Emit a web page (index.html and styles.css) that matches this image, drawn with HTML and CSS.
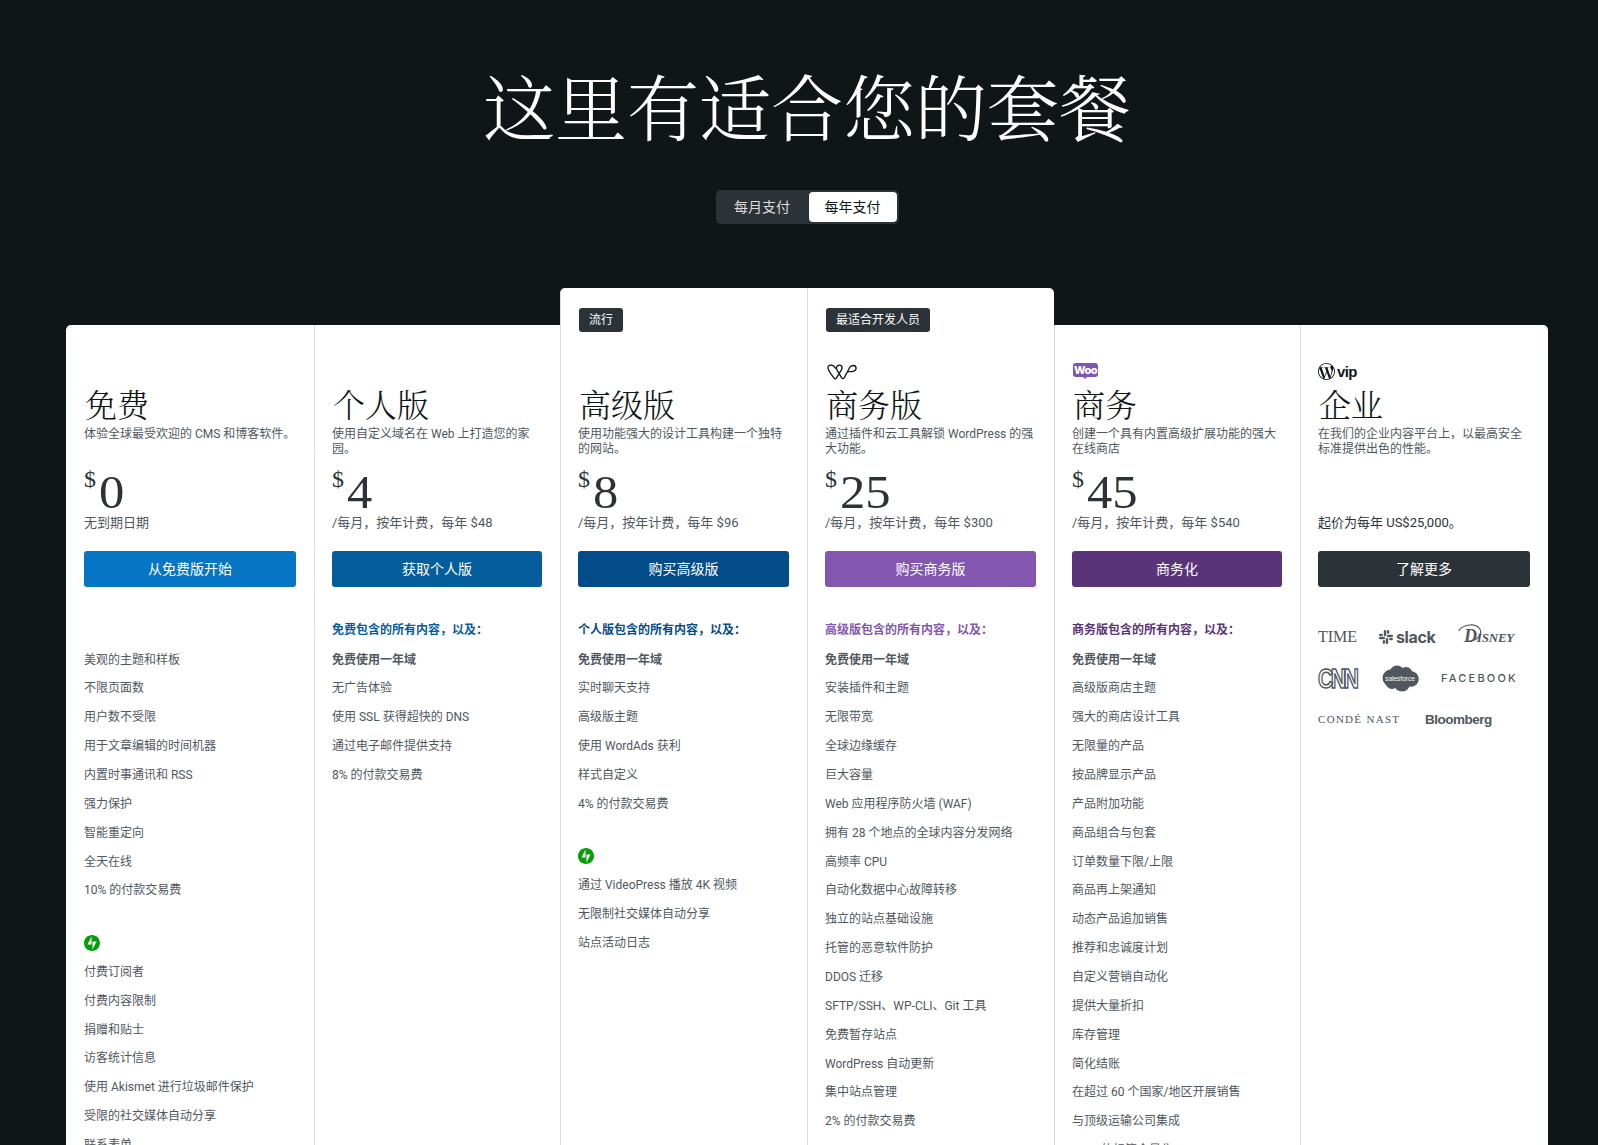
FILE: index.html
```html
<!DOCTYPE html>
<html lang="zh-CN">
<head>
<meta charset="utf-8">
<title>WordPress 套餐</title>
<link rel="stylesheet" href="styles.css">
</head>
<body>
<main class="page">
  <header class="hero">
    <h1 class="title">这里有适合您的套餐</h1>
    <div class="toggle">
      <span class="toggle-item">每月支付</span>
      <span class="toggle-item toggle-item-on">每年支付</span>
    </div>
  </header>

  <section class="plans">
    <article class="plan plan-first">
      <div class="logo-slot"></div>
      <h2 class="name">免费</h2>
      <p class="desc">体验全球最受欢迎的 CMS 和博客软件。</p>
      <div class="price"><span class="cur">$</span><span class="num">0</span></div>
      <p class="sub">无到期日期</p>
      <a class="cta cta-free">从免费版开始</a>
      <p class="incl"></p>
      <ul class="feats">
        <li>美观的主题和样板</li><li>不限页面数</li><li>用户数不受限</li><li>用于文章编辑的时间机器</li><li>内置时事通讯和 RSS</li><li>强力保护</li><li>智能重定向</li><li>全天在线</li><li>10% 的付款交易费</li>
      </ul>
      <svg class="jp" viewBox="0 0 32 32"><path fill="#069e08" fill-rule="evenodd" d="M16 0C7.200 0 0 7.200 0 16s7.200 16 16 16 16-7.200 16-16S24.800 0 16 0zM15 19H7l8-16v16zM17 29V13h8l-8 16z"/></svg>
      <ul class="feats feats-after">
        <li>付费订阅者</li><li>付费内容限制</li><li>捐赠和贴士</li><li>访客统计信息</li><li>使用 Akismet 进行垃圾邮件保护</li><li>受限的社交媒体自动分享</li><li>联系表单</li>
      </ul>
    </article>

    <article class="plan">
      <div class="logo-slot"></div>
      <h2 class="name">个人版</h2>
      <p class="desc">使用自定义域名在 Web 上打造您的家园。</p>
      <div class="price"><span class="cur">$</span><span class="num">4</span></div>
      <p class="sub">/每月，按年计费，每年 $48</p>
      <a class="cta cta-personal">获取个人版</a>
      <p class="incl incl-personal">免费包含的所有内容，以及：</p>
      <ul class="feats">
        <li class="strong">免费使用一年域</li><li>无广告体验</li><li>使用 SSL 获得超快的 DNS</li><li>通过电子邮件提供支持</li><li>8% 的付款交易费</li>
      </ul>
    </article>

    <article class="plan plan-raised">
      <div class="tag-slot"><span class="tag">流行</span></div>
      <div class="logo-slot"></div>
      <h2 class="name">高级版</h2>
      <p class="desc">使用功能强大的设计工具构建一个独特的网站。</p>
      <div class="price"><span class="cur">$</span><span class="num">8</span></div>
      <p class="sub">/每月，按年计费，每年 $96</p>
      <a class="cta cta-premium">购买高级版</a>
      <p class="incl incl-premium">个人版包含的所有内容，以及：</p>
      <ul class="feats">
        <li class="strong">免费使用一年域</li><li>实时聊天支持</li><li>高级版主题</li><li>使用 WordAds 获利</li><li>样式自定义</li><li>4% 的付款交易费</li>
      </ul>
      <svg class="jp" viewBox="0 0 32 32"><path fill="#069e08" fill-rule="evenodd" d="M16 0C7.200 0 0 7.200 0 16s7.200 16 16 16 16-7.200 16-16S24.800 0 16 0zM15 19H7l8-16v16zM17 29V13h8l-8 16z"/></svg>
      <ul class="feats feats-after">
        <li>通过 VideoPress 播放 4K 视频</li><li>无限制社交媒体自动分享</li><li>站点活动日志</li>
      </ul>
    </article>

    <article class="plan plan-raised">
      <div class="tag-slot"><span class="tag">最适合开发人员</span></div>
      <div class="logo-slot">
        <svg class="logo-wp" viewBox="0 0 32 18" fill="none" stroke="#101517" stroke-width="1.400" stroke-linejoin="round" stroke-linecap="round">
          <path d="M9 5.500C7 1.500 1 1 1 5 1 8 4.500 12 7.500 16 8.200 17 9.300 17 10 16L15.500 7C17.500 3 14 1.500 12 2.500 10 3.500 9.500 5.500 11 8L15.500 15.500C16.500 17 17.500 17 18.500 15.500L24 5C25.500 2 31 1.500 31 5.500 31 9 26 9.500 22 9"/>
        </svg>
      </div>
      <h2 class="name">商务版</h2>
      <p class="desc">通过插件和云工具解锁 WordPress 的强大功能。</p>
      <div class="price"><span class="cur">$</span><span class="num">25</span></div>
      <p class="sub">/每月，按年计费，每年 $300</p>
      <a class="cta cta-business">购买商务版</a>
      <p class="incl incl-business">高级版包含的所有内容，以及：</p>
      <ul class="feats">
        <li class="strong">免费使用一年域</li><li>安装插件和主题</li><li>无限带宽</li><li>全球边缘缓存</li><li>巨大容量</li><li>Web 应用程序防火墙 (WAF)</li><li>拥有 28 个地点的全球内容分发网络</li><li>高频率 CPU</li><li>自动化数据中心故障转移</li><li>独立的站点基础设施</li><li>托管的恶意软件防护</li><li>DDOS 迁移</li><li>SFTP/SSH、WP-CLI、Git 工具</li><li>免费暂存站点</li><li>WordPress 自动更新</li><li>集中站点管理</li><li>2% 的付款交易费</li>
      </ul>
    </article>

    <article class="plan">
      <div class="logo-slot">
        <span class="logo-woo">Woo</span>
      </div>
      <h2 class="name">商务</h2>
      <p class="desc">创建一个具有内置高级扩展功能的强大在线商店</p>
      <div class="price"><span class="cur">$</span><span class="num">45</span></div>
      <p class="sub">/每月，按年计费，每年 $540</p>
      <a class="cta cta-commerce">商务化</a>
      <p class="incl incl-commerce">商务版包含的所有内容，以及：</p>
      <ul class="feats">
        <li class="strong">免费使用一年域</li><li>高级版商店主题</li><li>强大的商店设计工具</li><li>无限量的产品</li><li>按品牌显示产品</li><li>产品附加功能</li><li>商品组合与包套</li><li>订单数量下限/上限</li><li>商品再上架通知</li><li>动态产品追加销售</li><li>推荐和忠诚度计划</li><li>自定义营销自动化</li><li>提供大量折扣</li><li>库存管理</li><li>简化结账</li><li>在超过 60 个国家/地区开展销售</li><li>与顶级运输公司集成</li><li>eBay 的标签全量化</li>
      </ul>
    </article>

    <article class="plan plan-last">
      <div class="logo-slot logo-vip">
        <svg class="wp-mark" viewBox="2 2 20 20"><path fill="#101517" d="M12.158 12.786l-2.698 7.84c.806.236 1.657.365 2.54.365 1.047 0 2.051-.18 2.986-.51-.024-.037-.046-.078-.065-.123l-2.763-7.57zM3.009 12c0 3.559 2.068 6.634 5.067 8.092L3.788 8.341C3.289 9.459 3.009 10.696 3.009 12zM18.069 11.546c0-1.112-.399-1.881-.741-2.48-.456-.741-.883-1.368-.883-2.109 0-.826.627-1.596 1.51-1.596.04 0 .078.005.116.007C16.472 4.203 14.34 3.009 12 3.009c-3.141 0-5.904 1.612-7.512 4.052.211.007.41.011.579.011.94 0 2.396-.114 2.396-.114.484-.028.541.683.057.74 0 0-.487.057-1.029.085l3.274 9.739 1.968-5.901-1.401-3.838c-.484-.028-.943-.085-.943-.085-.485-.029-.428-.769.057-.741 0 0 1.484.114 2.368.114.94 0 2.397-.114 2.397-.114.485-.028.542.683.057.74 0 0-.488.057-1.029.085l3.249 9.665.897-2.996C17.841 13.284 18.069 12.316 18.069 11.546zM19.889 7.686c.039.286.06.593.06.924 0 .912-.171 1.938-.684 3.22l-2.746 7.94C19.173 18.212 20.991 15.319 20.991 12c0-1.564-.399-3.034-1.102-4.314zM12 22C6.486 22 2 17.514 2 12S6.486 2 12 2s10 4.486 10 10-4.486 10-10 10z"/></svg>
        <span class="vip">vip</span>
      </div>
      <h2 class="name">企业</h2>
      <p class="desc">在我们的企业内容平台上，以最高安全标准提供出色的性能。</p>
      <div class="price"></div>
      <p class="sub sub-ent">起价为每年 US$25,000。</p>
      <a class="cta cta-ent">了解更多</a>
      <div class="brands">
        <div class="brand-row">
          <span class="b-time">TIME</span>
          <span class="b-slack">
            <svg class="slack-mark" viewBox="0 0 16 16" fill="#50575e"><rect x="5.500" y="0" width="2.800" height="7" rx="1.400"/><rect x="9" y="5.500" width="7" height="2.800" rx="1.400"/><rect x="7.700" y="9" width="2.800" height="7" rx="1.400"/><rect x="0" y="7.700" width="7" height="2.800" rx="1.400"/><rect x="0" y="4.300" width="4.500" height="2.600" rx="1.300"/><rect x="11.500" y="9.100" width="4.500" height="2.600" rx="1.300"/><rect x="9.100" y="0" width="2.600" height="4.500" rx="1.300"/><rect x="4.300" y="11.500" width="2.600" height="4.500" rx="1.300"/></svg>
            <span>slack</span>
          </span>
          <span class="b-disney">
            <svg class="disney-arc" viewBox="0 0 30 22" fill="none" stroke="#50575e" stroke-width="1.300" stroke-linecap="round"><path d="M1 8C7 1 19 0 24 6 28 12 21 20 12 20"/></svg>
            <span class="disney-text">Disney</span>
          </span>
        </div>
        <div class="brand-row">
          <span class="b-cnn"><span class="cnn-text">CNN</span></span>
          <span class="b-sf">
            <svg class="sf-cloud" viewBox="0 0 38 27" fill="#50575e"><circle cx="10" cy="13" r="8.500"/><circle cx="16" cy="8" r="7.500"/><circle cx="25" cy="8.500" r="6.500"/><circle cx="30" cy="14" r="7.800"/><circle cx="21" cy="18.500" r="8"/><circle cx="11" cy="17.500" r="6.500"/></svg>
            <span class="sf-text">salesforce</span>
          </span>
          <span class="b-fb">FACEBOOK</span>
        </div>
        <div class="brand-row">
          <span class="b-conde">CONDÉ NAST</span>
          <span class="b-bloom">Bloomberg</span>
        </div>
      </div>
    </article>
  </section>
</main>
</body>
</html>
```

FILE: styles.css
```css
* { box-sizing: border-box; }

html, body {
  margin: 0;
  height: 1145px;
  overflow: hidden;
  background: #101517;
}

body {
  font-family: "Roboto", "Noto Sans CJK SC", sans-serif;
  color: #50575e;
  font-size: 12px;
}

.page {
  padding: 0 50px 0 66px;
}

.hero {
  display: flex;
  flex-direction: column;
  align-items: center;
  height: 288px;
  padding-top: 62px;
}

.title {
  margin: 0;
  height: 84px;
  font-family: "Noto Serif CJK SC", "Liberation Serif", "Noto Sans CJK SC", serif;
  font-size: 72px;
  line-height: 84px;
  font-weight: 300;
  color: #fff;
}

.toggle {
  display: flex;
  margin-top: 44px;
  height: 34px;
  padding: 2px 2px 2px 0;
  background: #2c3338;
  border-radius: 5px;
}

.toggle-item {
  display: flex;
  align-items: center;
  justify-content: center;
  width: 93px;
  padding-bottom: 2px;
  font-size: 14px;
  color: #dcdcde;
}

.toggle-item-on {
  width: 88px;
  background: #fff;
  color: #101517;
  border-radius: 4px;
}

.plans {
  display: grid;
  grid-template-columns: 248px 246px 247px 247px 246px 248px;
  align-items: stretch;
}

.plan {
  margin-top: 37px;
  padding: 37px 18px 0 17px;
  height: 900px;
  background: #fff;
  border-left: 1px solid #dcdcde;
}

.plan-first {
  padding-left: 18px;
  border-left: 0;
  border-top-left-radius: 5px;
}

.plan-last {
  border-top-right-radius: 5px;
}

.plan-raised {
  margin-top: 0;
  padding-top: 20px;
  height: 937px;
}

.plan-raised:nth-child(3) {
  border-top-left-radius: 5px;
}

.plan-raised:nth-child(4) {
  border-top-right-radius: 5px;
}

.tag-slot {
  height: 54px;
}

.tag {
  display: inline-block;
  height: 24px;
  margin-left: 1px;
  padding: 0 10px;
  line-height: 24px;
  font-size: 12px;
  color: #fff;
  background: #2c3338;
  border-radius: 3px;
}

.logo-slot {
  display: flex;
  align-items: center;
  height: 18px;
}

.logo-wp {
  width: 30px;
  height: 17px;
  margin-left: 2px;
}

.logo-woo {
  position: relative;
  display: block;
  width: 25px;
  height: 14px;
  margin: -2px 0 0 1px;
  font-family: "Inter", sans-serif;
  font-size: 11px;
  font-weight: 800;
  line-height: 14px;
  text-align: center;
  letter-spacing: -0.6px;
  color: #fff;
  background: #7f54b3;
  border-radius: 3px;
}

.logo-woo::after {
  content: "";
  position: absolute;
  left: 10px;
  bottom: -2px;
  border: 2px solid transparent;
  border-top-color: #7f54b3;
  border-bottom: 0;
}

.wp-mark {
  width: 17px;
  height: 17px;
}

.vip {
  margin-left: 2px;
  font-family: "Liberation Sans", sans-serif;
  font-size: 15px;
  font-weight: 700;
  letter-spacing: -0.6px;
  color: #101517;
}

.name {
  margin: 3px 0 0 1px;
  height: 43px;
  font-family: "Noto Serif CJK SC", "Liberation Serif", "Noto Sans CJK SC", serif;
  font-size: 32px;
  line-height: 40px;
  font-weight: 300;
  color: #101517;
}

.desc {
  margin: 0 -2px 0 0;
  height: 45px;
  font-size: 12px;
  line-height: 15px;
  padding-top: 0.500px;
}

.price {
  display: flex;
  height: 43px;
  font-family: "Liberation Serif", serif;
  color: #2c3338;
}

.cur {
  margin-right: 3px;
  height: 24px;
  font-size: 24px;
  line-height: 24px;
  margin-top: -4px;
}

.num {
  display: inline-block;
  height: 43px;
  font-size: 46px;
  line-height: 43px;
  transform: scaleX(1.100);
  transform-origin: left center;
}

.sub {
  margin: 0 0 1px;
  height: 18px;
  font-size: 13px;
  line-height: 18px;
}

.sub-ent {
  color: #2c3338;
}

.cta {
  display: flex;
  align-items: center;
  justify-content: center;
  margin-top: 19px;
  height: 36px;
  padding-bottom: 2px;
  font-size: 14px;
  color: #fff;
  border-radius: 3px;
}

.cta-free { background: #0675c4; }
.cta-personal { background: #055d9c; }
.cta-premium { background: #044b89; }
.cta-business { background: #8356b0; }
.cta-commerce { background: #5a3478; }
.cta-ent { background: #2c3338; }

.incl {
  margin: 34px 0 0;
  height: 18px;
  font-size: 12px;
  line-height: 18px;
  font-weight: 700;
}

.incl-personal { color: #055d9c; }
.incl-premium { color: #044b89; }
.incl-business { color: #8356b0; }
.incl-commerce { color: #5a3478; }

.feats {
  margin: 11.500px 0 0;
  padding: 0;
  list-style: none;
}

.feats-after {
  margin-top: 12px;
}

.feats li {
  height: 18px;
  margin-bottom: 10.870px;
  font-size: 12px;
  line-height: 18px;
  white-space: nowrap;
}

.feats .strong {
  font-weight: 700;
}

.jp {
  display: block;
  width: 16px;
  height: 16px;
  margin-top: 35.500px;
}

.brands {
  display: flex;
  flex-direction: column;
  gap: 13px;
  margin-top: 36px;
  color: #50575e;
}

.brand-row {
  display: flex;
  align-items: center;
  height: 28px;
}

.b-time {
  width: 61px;
  font-family: "Liberation Serif", serif;
  font-size: 16px;
}

.b-slack {
  display: flex;
  align-items: center;
  width: 79px;
  font-family: "Inter", sans-serif;
  font-size: 16px;
  font-weight: 700;
  letter-spacing: -0.4px;
}

.slack-mark {
  width: 14px;
  height: 14px;
  margin-right: 3px;
}

.b-disney {
  position: relative;
  height: 28px;
  width: 58px;
}

.disney-text {
  display: block;
  padding: 3px 0 0 6px;
  font-family: "Liberation Serif", serif;
  font-style: italic;
  font-size: 18px;
  line-height: 20px;
  font-variant: small-caps;
  font-weight: 700;
  letter-spacing: -0.2px;
}

.disney-arc {
  position: absolute;
  left: 0;
  top: 0;
  width: 27px;
  height: 20px;
}

.b-cnn {
  width: 63px;
}

.cnn-text {
  display: inline-block;
  font-family: "Liberation Sans", sans-serif;
  font-size: 21px;
  line-height: 21px;
  font-weight: 700;
  letter-spacing: -2.300px;
  color: #fff;
  -webkit-text-stroke: 1.200px #50575e;
  transform: scaleY(1.300);
}

.b-sf {
  position: relative;
  display: flex;
  width: 60px;
}

.sf-cloud {
  width: 38px;
  height: 27px;
}

.sf-text {
  position: absolute;
  left: 0;
  top: 0;
  width: 38px;
  font-family: "Liberation Sans", sans-serif;
  font-size: 6.500px;
  line-height: 27px;
  text-align: center;
  color: #fff;
}

.b-fb {
  font-family: "Inter", sans-serif;
  font-size: 11px;
  font-weight: 500;
  letter-spacing: 2.200px;
}

.b-conde {
  width: 107px;
  font-family: "Liberation Serif", serif;
  font-size: 11px;
  letter-spacing: 1.300px;
}

.b-bloom {
  font-family: "Liberation Sans", sans-serif;
  font-size: 13.500px;
  font-weight: 700;
  letter-spacing: -0.5px;
}
```
